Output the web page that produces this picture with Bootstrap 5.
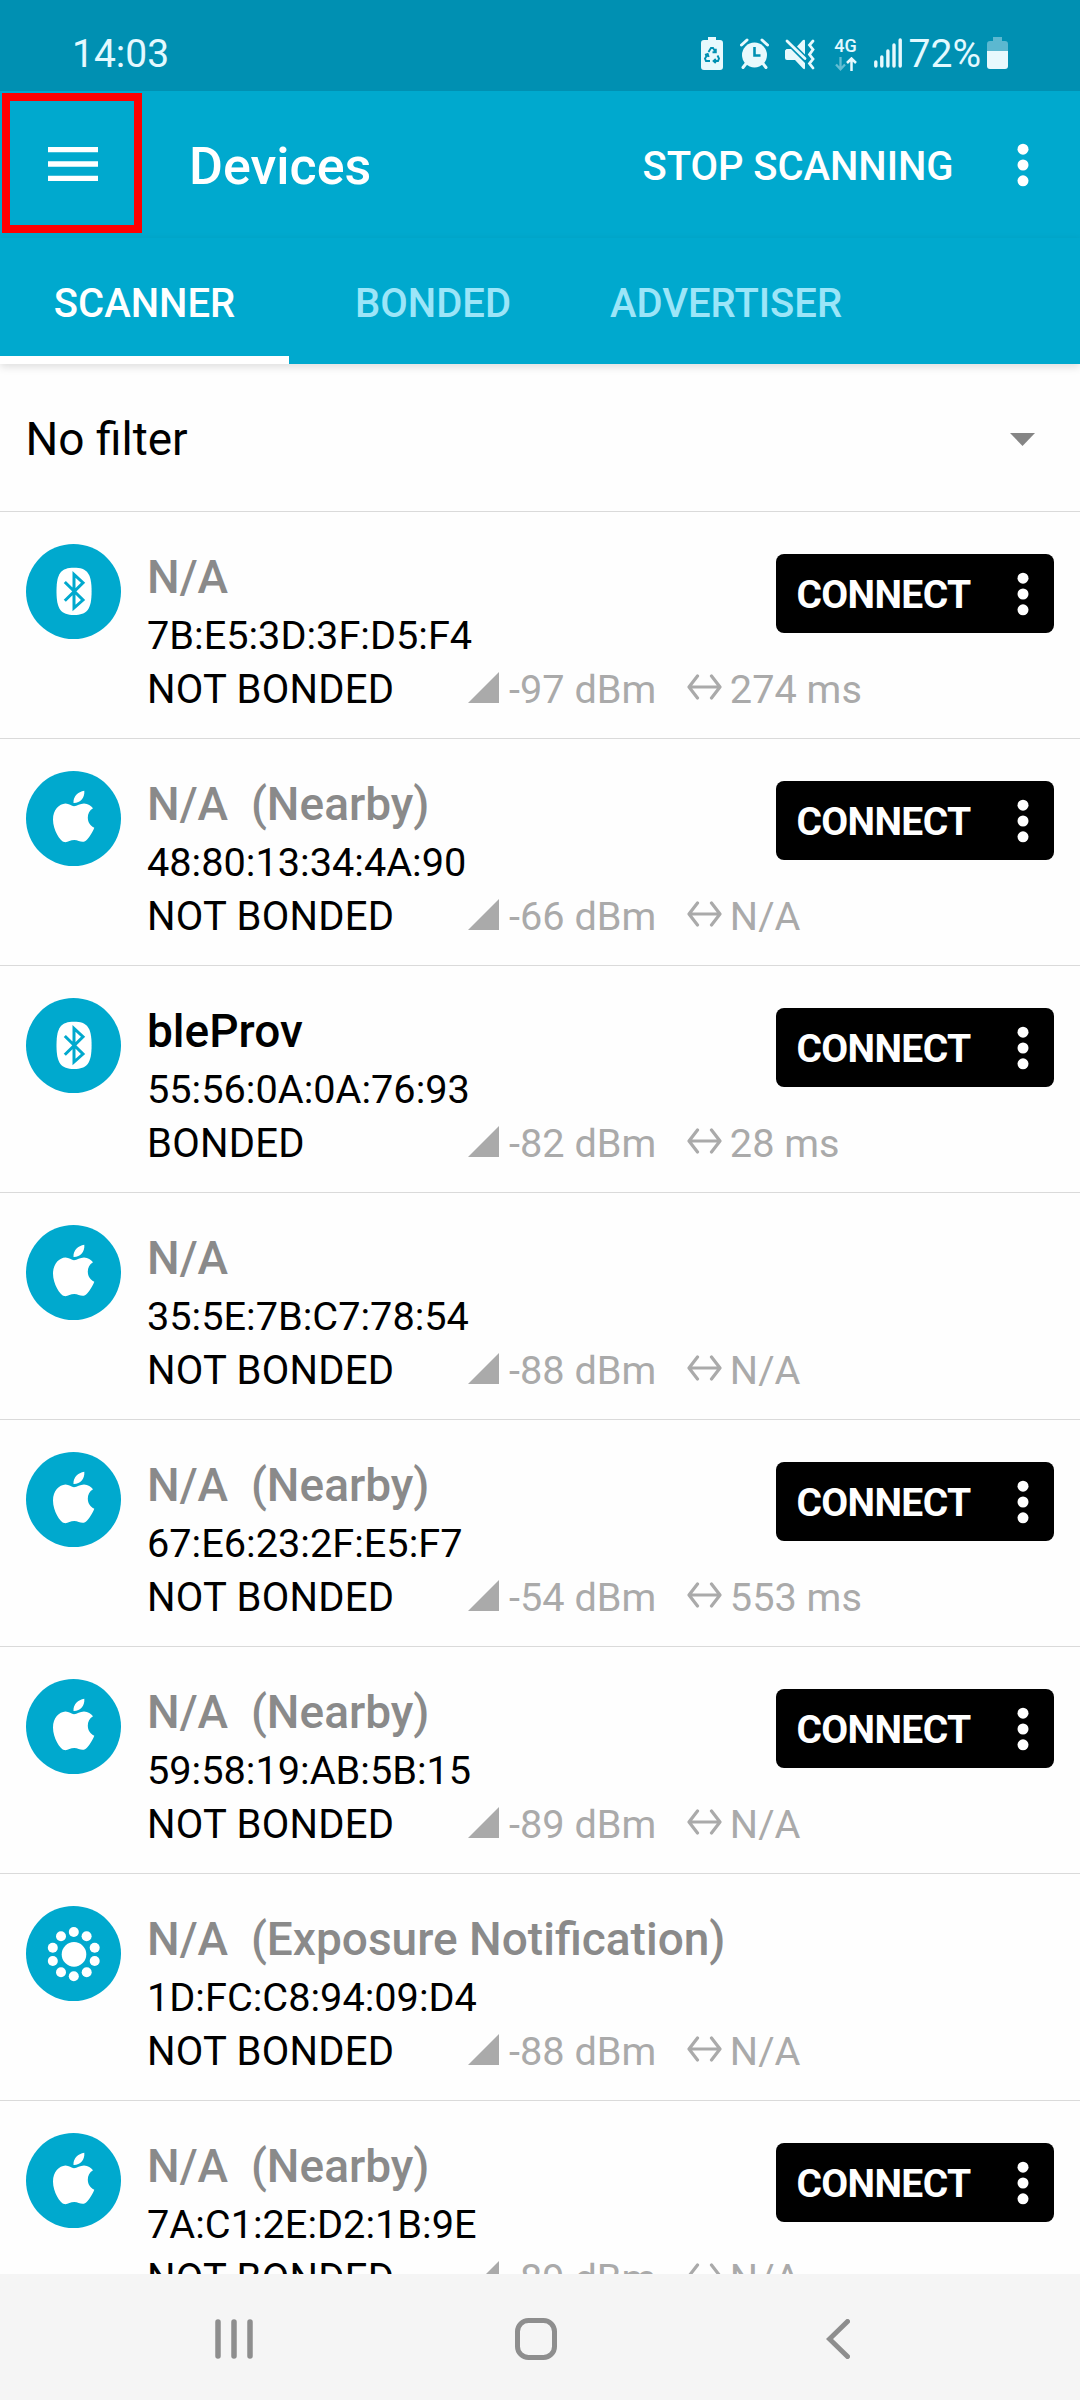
<!DOCTYPE html>
<html lang="en">
<head>
<meta charset="utf-8">
<meta name="viewport" content="width=device-width, initial-scale=1">
<title>Devices</title>
<link rel="stylesheet" href="https://cdn.jsdelivr.net/npm/bootstrap@5.3.0/dist/css/bootstrap.min.css">
<style>
  :root { --sky: #00a9ce; --sky-dark: #0090b2; }
  body { font-family: Roboto, sans-serif; font-size: 40px; color: #000; background: #fefefe; }
  svg { display: block; flex: none; }
  .screen { width: 1080px; height: 2400px; }
  .statusbar { height: 91px; background: var(--sky-dark); color: #e3f9ff; padding: 28px 72px 0; font-size: 39px; line-height: 52px; }
  .statusbar .net { font-size: 18px; line-height: 15px; font-weight: 500; width: 24px; margin: 10px 16px 0 0; }
  .ic-recycle { margin: 9px 17px 0 0; }
  .ic-alarm { margin: 10px 16px 0 0; }
  .ic-mute { margin: 11px 19px 0 0; }
  .ic-bars { margin: 10px 7px 0 0; }
  .ic-battery { margin: 9px 0 0 6px; }
  .appbar { height: 147px; background: var(--sky); color: #fff; padding: 0 51.5px 0 2px; }
  .menu-btn { width: 140px; height: 140px; border: 8px solid #f00; margin-bottom: 3px; padding: 2px 0 0 2px; }
  .appbar h1 { font-size: 52px; line-height: 60px; font-weight: 500; margin-left: 47px; padding-top: 4px; }
  .action { font-weight: 500; line-height: 48px; margin-right: 63px; padding-top: 4px; letter-spacing: -.05px; }
  .tabs { height: 126px; background: var(--sky); box-shadow: 0 3px 8px rgba(0,0,0,.13); }
  .tabs .nav-link { width: 288px; color: #9ce5f8; font-weight: 500; line-height: 48px; padding: 14px 0 0; border-bottom: 8px solid transparent; }
  .tabs .nav-link.active { width: 289px; color: #fff; border-color: #fff; }
  .tabs .nav-link.wide { width: 298px; }
  .filter { height: 148px; font-size: 46px; line-height: 56px; padding: 3px 45px 0 25.5px; border-bottom: 1px solid #dadada; }
  .device { height: 227px; border-bottom: 1px solid #dadada; padding: 32px 26px 0; gap: 26px; }
  .device .info { padding-top: 2px; line-height: 54px; }
  .device h2 { font-size: 46px; line-height: 63px; font-weight: 500; margin: 0; white-space: pre; }
  .device h2.unnamed { color: #8a8a8a; }
  .addr { font-size: 39.7px; }
  .bond { width: 321px; letter-spacing: .25px; }
  .metric { color: #aaa; font-size: 39.7px; }
  .ic-sig { margin: 0 10px 6px 0; }
  .ic-span { margin: 0 8px 7px 30.5px; }
  .connect { width: 278px; height: 79px; padding: 0 25.5px 0 20.5px; background: #000; color: #fff; border: 0; border-radius: 8px; font-size: 39px; line-height: 48px; font-weight: 700; letter-spacing: -.65px; top: 42px; right: 26px; }
  .connect span { padding-top: 2px; }
  .sysnav { height: 126px; background: #f5f5f5; padding: 4px 0 0 215px; }
  .ic-home { margin: 0 269px 0 262px; }
</style>
</head>
<body>
<svg width="0" height="0" class="position-absolute" aria-hidden="true">
  <symbol id="bt" viewBox="0 0 95 95"><circle cx="47.500" cy="47.500" r="47.500" fill="#00a9ce"/><path d="M48 23.700C61 23.700 65.600 29 65.600 47.300S61 71 48 71 30.500 65.500 30.500 47.300 35 23.700 48 23.700Z" fill="#fff"/><path d="M38.800 38 57 56 48 64V30.500L57 38.700 38.800 56.700" fill="none" stroke="#00a9ce" stroke-width="3"/></symbol>
  <symbol id="apple" viewBox="0 0 95 95"><circle cx="47.500" cy="47.500" r="47.500" fill="#00a9ce"/><g fill="#fff"><path d="M58.300 19.800C59 27 54 32.300 47.500 32 47 25.500 52 20.800 58.300 19.800Z"/><path d="M48 35.200C51 35 54 32.400 58 32.400 62 32.600 65 34.500 67 37.300 63.500 39.500 61.800 42.500 61.800 46.500 61.800 51.300 64.500 55 68.300 56.700 66 62.500 62 68.500 59 70.200 55.500 72 52.500 69 48.300 69 44 69 41.500 71.800 38 71 34 70 27 59 27 48.500 27 39 33 32.800 39.500 32.500 43 32.500 45.500 35.200 48 35.200Z"/></g></symbol>
  <symbol id="expo" viewBox="0 0 95 95"><circle cx="47.500" cy="47.500" r="47.500" fill="#00a9ce"/><g fill="#fff"><circle cx="48" cy="48.400" r="12.300"/><circle cx="47.800" cy="26" r="5"/><circle cx="60.600" cy="30.300" r="5"/><circle cx="68.700" cy="41.700" r="5"/><circle cx="68.700" cy="55" r="5"/><circle cx="60.700" cy="66.200" r="5"/><circle cx="47.800" cy="70.300" r="5"/><circle cx="35" cy="66.200" r="5"/><circle cx="26.800" cy="55" r="5"/><circle cx="26.800" cy="41.700" r="5"/><circle cx="35" cy="30.300" r="5"/></g></symbol>
  <symbol id="dots" viewBox="0 0 12 44"><g fill="#fff"><circle cx="6" cy="6.200" r="5.500"/><circle cx="6" cy="22" r="5.500"/><circle cx="6" cy="37.800" r="5.500"/></g></symbol>
  <symbol id="sig" viewBox="0 0 31 31"><path d="M0 31 31 0V31Z" fill="#aaa"/></symbol>
  <symbol id="span" viewBox="0 0 35 26"><path d="M10.500 2 2 13 10.500 24M24.500 2 33 13 24.500 24M3 13H32" fill="none" stroke="#aaa" stroke-width="3.200" stroke-linecap="round" stroke-linejoin="round"/></symbol>
</svg>

<div class="screen d-flex flex-column overflow-hidden">
  <div class="statusbar d-flex flex-shrink-0 justify-content-between align-items-start">
    <span>14:03</span>
    <div class="d-flex align-items-start">
      <svg class="ic-recycle" width="22" height="33" viewBox="0 0 22 33"><path d="M7 0H15V3H19A3 3 0 0 1 22 6V30A3 3 0 0 1 19 33H3A3 3 0 0 1 0 30V6A3 3 0 0 1 3 3H7Z" fill="#e8f9fd"/><path d="M7.500 15 10 11H12L14.500 15M16.500 18.500 18 21.500 17 24H13M9 24H5L4 21.500 6.500 17.500M14.800 11.800V15.300H11.500M14.800 22 12.600 24 14.800 26M4 18 6.700 17 7.700 20" fill="none" stroke="#0090b2" stroke-width="1.900"/></svg>
      <svg class="ic-alarm" width="29" height="32" viewBox="0 0 29 32"><circle cx="14.500" cy="17" r="12.500" fill="#e8f9fd"/><path d="M1.500 7 7 2M27.500 7 22 2M6.500 25 3 29.500M22.500 25 26 29.500" stroke="#e8f9fd" stroke-width="3" stroke-linecap="round"/><path d="M14.500 9V17.500H20.500" fill="none" stroke="#0090b2" stroke-width="2.600"/></svg>
      <svg class="ic-mute" width="30" height="31" viewBox="0 0 30 31"><g fill="#e8f9fd"><path d="M1.500 10H6L20 24V29Q20 31 18 29.500L10 21H2Q0 21 0 19V11.500Z"/><path d="M12 7.500 18 1Q20 0 20 2V15.500Z"/></g><path d="M2 2 20 19.500M28 2 24.500 6 28 10.500 24.500 15.500 28 20 24.500 24.500 28 29" fill="none" stroke="#e8f9fd" stroke-width="2.800" stroke-linecap="round"/></svg>
      <div class="net d-flex flex-column align-items-center"><span>4G</span><svg width="22" height="14" viewBox="0 0 22 14" class="mt-1"><path d="M5.500 0V12M1 7.500 5.500 12.300 10 7.500" fill="none" stroke="#63bdd3" stroke-width="2.300"/><path d="M16.500 14V1.500M12 6 16.500 1.500 21 6" fill="none" stroke="#e8f9fd" stroke-width="2.500"/></svg></div>
      <svg class="ic-bars" width="28" height="30" viewBox="0 0 28 30"><path d="M1.800 24V28M7.800 19V28M13.900 13V28M20 7V28M26.200 2V28" stroke="#e8f9fd" stroke-width="3.400" stroke-linecap="round"/></svg>
      <span>72%</span>
      <svg class="ic-battery" width="21" height="33" viewBox="0 0 21 33"><path d="M6 0H15V4H18A3 3 0 0 1 21 7V14H0V7A3 3 0 0 1 3 4H6Z" fill="#5cb8d0"/><path d="M0 14H21V29A3 3 0 0 1 18 32H3A3 3 0 0 1 0 29Z" fill="#e8f9fd"/></svg>
    </div>
  </div>

  <header class="appbar d-flex flex-shrink-0 align-items-center">
    <div class="menu-btn d-flex align-items-center justify-content-center"><svg width="50" height="34" viewBox="0 0 50 34" role="img" aria-label="Menu"><path d="M0 2.700H50M0 17H50M0 31.300H50" stroke="#fff" stroke-width="5.300"/></svg></div>
    <h1 class="mb-0">Devices</h1>
    <span class="action ms-auto">STOP SCANNING</span>
    <svg width="12" height="44"><use href="#dots"/></svg>
  </header>
  <nav class="tabs nav flex-nowrap flex-shrink-0 position-relative">
    <a class="nav-link active d-flex align-items-center justify-content-center">SCANNER</a>
    <a class="nav-link d-flex align-items-center justify-content-center">BONDED</a>
    <a class="nav-link wide d-flex align-items-center justify-content-center">ADVERTISER</a>
  </nav>
  <div class="filter d-flex flex-shrink-0 align-items-center justify-content-between"><span>No filter</span><svg width="25" height="13" viewBox="0 0 25 13"><path d="M0 0H25L12.500 13Z" fill="#858585"/></svg></div>

  <main id="devices" class="flex-grow-1 overflow-hidden"></main>

  <footer class="sysnav d-flex flex-shrink-0 align-items-center">
    <svg width="38" height="40" viewBox="0 0 38 40"><path d="M3 3V37M19 3V37M35 3V37" stroke="#8e8e8e" stroke-width="5.500" stroke-linecap="round"/></svg>
    <svg class="ic-home" width="42" height="42" viewBox="0 0 42 42"><rect x="2.500" y="2.500" width="37" height="37" rx="11" fill="none" stroke="#8e8e8e" stroke-width="5"/></svg>
    <svg width="24" height="40" viewBox="0 0 24 40"><path d="M21.500 2.500 3.500 20 21.500 37.500" fill="none" stroke="#8e8e8e" stroke-width="5" stroke-linecap="round"/></svg>
  </footer>
</div>

<script src="https://cdn.jsdelivr.net/npm/bootstrap@5.3.0/dist/js/bootstrap.bundle.min.js"></script>
<script>
  // icon, name, address, bond state, signal, interval, connectable
  const devices = [
    ["bt", "N/A", "7B:E5:3D:3F:D5:F4", "NOT BONDED", "-97 dBm", "274 ms", true],
    ["apple", "N/A  (Nearby)", "48:80:13:34:4A:90", "NOT BONDED", "-66 dBm", "N/A", true],
    ["bt", "bleProv", "55:56:0A:0A:76:93", "BONDED", "-82 dBm", "28 ms", true],
    ["apple", "N/A", "35:5E:7B:C7:78:54", "NOT BONDED", "-88 dBm", "N/A", false],
    ["apple", "N/A  (Nearby)", "67:E6:23:2F:E5:F7", "NOT BONDED", "-54 dBm", "553 ms", true],
    ["apple", "N/A  (Nearby)", "59:58:19:AB:5B:15", "NOT BONDED", "-89 dBm", "N/A", true],
    ["expo", "N/A  (Exposure Notification)", "1D:FC:C8:94:09:D4", "NOT BONDED", "-88 dBm", "N/A", false],
    ["apple", "N/A  (Nearby)", "7A:C1:2E:D2:1B:9E", "NOT BONDED", "-89 dBm", "N/A", true]
  ];
  document.getElementById("devices").innerHTML = devices.map(([icon, name, addr, bond, rssi, interval, connectable]) => `
    <article class="device d-flex align-items-start position-relative">
      <svg width="95" height="95"><use href="#${icon}"/></svg>
      <div class="info">
        <h2 class="${name.startsWith("N/A") ? "unnamed" : ""}">${name}</h2>
        <div class="addr">${addr}</div>
        <div class="d-flex align-items-center text-nowrap">
          <div class="bond">${bond}</div>
          <svg class="ic-sig" width="31" height="31"><use href="#sig"/></svg><span class="metric">${rssi}</span>
          <svg class="ic-span" width="35" height="26"><use href="#span"/></svg><span class="metric">${interval}</span>
        </div>
      </div>
      ${connectable ? `<button class="connect position-absolute d-flex align-items-center justify-content-between" type="button"><span>CONNECT</span><svg width="12" height="44"><use href="#dots"/></svg></button>` : ""}
    </article>`).join("");
</script>
</body>
</html>
